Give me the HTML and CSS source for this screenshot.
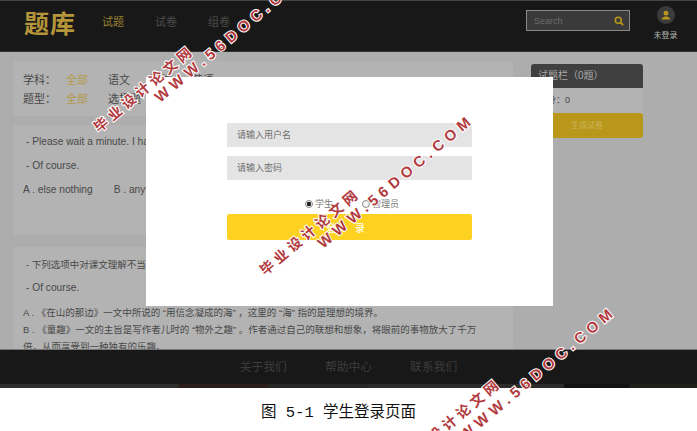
FILE: index.html
```html
<!DOCTYPE html>
<html lang="en">
<head>
	<meta charset="UTF-8">
	<title>学生登录页面</title>
	<link rel="stylesheet" href="styles.css">
</head>
<body>
<div class="shot">
	<header class="top">
		<div class="logo">题库</div>
		<nav class="nav">
			<a class="on">试题</a>
			<a>试卷</a>
			<a>组卷</a>
		</nav>
		<div class="search">
			<span>Search</span>
			<svg width="10" height="10" viewBox="0 0 10 10"><circle cx="4.3" cy="4.3" r="3" fill="none" stroke="#b8971b" stroke-width="1.6"/><path d="M6.5 6.5L9.2 9.2" stroke="#b8971b" stroke-width="1.8"/></svg>
		</div>
		<div class="user">
			<div class="avatar">
				<svg width="10" height="10" viewBox="0 0 10 10"><circle cx="5" cy="3.2" r="2.4" fill="#b8971b"/><path d="M1 9.5V8.2L3.6 6.6H6.4L9 8.2V9.5Z" fill="#b8971b"/></svg>
			</div>
			<div class="user-name">未登录</div>
		</div>
	</header>

	<div class="main">
		<div class="left">
			<section class="filter">
				<div class="filter-row">
					<span class="filter-label">学科：</span>
					<span class="filter-item gold">全部</span>
					<span class="filter-item">语文</span>
					<span class="filter-item">数学</span>
					<span class="filter-item">英语</span>
				</div>
				<div class="filter-row">
					<span class="filter-label">题型：</span>
					<span class="filter-item gold">全部</span>
					<span class="filter-item">选择题</span>
				</div>
			</section>
			<section class="card card-one">
				<p class="ask">- Please wait a minute. I have something to tell you.</p>
				<p class="ask">- Of course.</p>
				<p class="opts"><span>A . else nothing</span><span>B . anything else</span></p>
			</section>
			<section class="card card-two">
				<p class="ask ask-cn">- 下列选项中对课文理解不当的一项是</p>
				<p class="ask">- Of course.</p>
				<p class="opt">A . 《在山的那边》一文中所说的 “用信念凝成的海” ，这里的 “海” 指的是理想的境界。</p>
				<p class="opt">B . 《童趣》一文的主旨是写作者儿时的 “物外之趣” 。作者通过自己的联想和想象，将眼前的事物放大了千万</p>
				<p class="opt">倍，从而享受到一种独有的乐趣。</p>
			</section>
		</div>
		<aside class="side">
			<div class="side-head">试题栏（0题）</div>
			<div class="side-count">总分：0</div>
			<div class="side-btn">生成试卷</div>
		</aside>
	</div>

	<footer class="foot">
		<a>关于我们</a>
		<a>帮助中心</a>
		<a>联系我们</a>
	</footer>
	<div class="strip">
		<i class="s1"></i><i class="s2"></i><i class="s3"></i><i class="s4"></i><i class="s5"></i><i class="s6"></i>
	</div>

	<!-- login dialog -->
	<div class="modal">
		<input class="field" type="text" placeholder="请输入用户名">
		<input class="field" type="password" placeholder="请输入密码">
		<div class="roles">
			<label class="role"><span class="radio checked"></span>学生</label>
			<label class="role"><span class="radio"></span>管理员</label>
		</div>
		<button class="login" type="button">登 录</button>
	</div>
</div>

<p class="caption">图 5-1 学生登录页面</p>

<!-- stamped watermarks -->
<svg class="marks" width="697" height="431" viewBox="0 0 697 431">
	<text class="mark" x="99" y="133" textLength="122" transform="rotate(-40 99 133)">毕业设计论文网</text>
	<text class="mark mark-url" x="160" y="103" textLength="194" transform="rotate(-40 160 103)">WWW.56DOC.COM</text>
	<text class="mark" x="265" y="276" textLength="122" transform="rotate(-40 265 276)">毕业设计论文网</text>
	<text class="mark mark-url" x="323" y="249" textLength="194" transform="rotate(-40 323 249)">WWW.56DOC.COM</text>
	<text class="mark" x="406" y="466" textLength="122" transform="rotate(-40 406 466)">毕业设计论文网</text>
	<text class="mark mark-url" x="465" y="441" textLength="194" transform="rotate(-40 465 441)">WWW.56DOC.COM</text>
</svg>
</body>
</html>
```

FILE: styles.css
```css
* {
	box-sizing: border-box;
}

body {
	margin: 0;
	width: 697px;
	height: 431px;
	overflow: hidden;
	background: #fff;
	position: relative;
	font-family: "Liberation Sans", "Noto Sans CJK SC", sans-serif;
	color: #484848;
}

p {
	margin: 0;
}

.shot {
	position: relative;
	height: 388px;
	overflow: hidden;
	display: flex;
	flex-direction: column;
	background: #adadad;
}

/* header */
.top {
	height: 52px;
	flex: none;
	display: flex;
	align-items: flex-start;
	background: #181818;
	border-top: 1px solid #444;
	border-bottom: 1px solid #333;
}

.logo {
	width: 102px;
	padding-left: 24px;
	font-family: "Noto Sans CJK SC", serif;
	font-size: 25px;
	line-height: 42px;
	font-weight: 700;
	letter-spacing: 1px;
	color: #b5953a;
	white-space: nowrap;
}

.nav {
	display: flex;
	gap: 31px;
	padding-top: 12px;
	width: 424px;
	font-size: 11px;
	line-height: 18px;
	color: #4c4c4c;
}

.nav .on {
	color: #9a8130;
}

.search {
	width: 104px;
	height: 21px;
	margin-top: 9px;
	padding: 0 5px 0 7px;
	display: flex;
	align-items: center;
	justify-content: space-between;
	background: #3a3a3a;
	border: 1px solid #8a8a8a;
	font-size: 9px;
	color: #6d6d6d;
}

.user {
	margin-left: 22px;
	width: 27px;
	display: flex;
	flex-direction: column;
	align-items: center;
	padding-top: 5px;
}

.avatar {
	width: 18px;
	height: 18px;
	border-radius: 50%;
	background: #3b3b3b;
	display: flex;
	align-items: center;
	justify-content: center;
}

.user-name {
	margin-top: 6px;
	font-size: 8px;
	line-height: 12px;
	color: #b0b0b0;
	white-space: nowrap;
}

/* main area */
.main {
	height: 297px;
	flex: none;
	overflow: hidden;
	display: flex;
	padding-left: 14px;
}

.left {
	width: 499px;
	padding-top: 9px;
}

.filter {
	height: 55px;
	padding: 10px 9px 0;
	background: #b3b3b3;
	font-size: 11px;
	line-height: 19px;
}

.filter-row {
	display: flex;
}

.filter-label {
	width: 43px;
}

.filter-item {
	width: 42px;
	white-space: nowrap;
}

.gold {
	color: #b39a4c;
}

.card {
	margin-top: 9px;
	background: #b3b3b3;
	font-size: 10.2px;
	padding: 0 9px;
}

.card-one {
	height: 110px;
	padding-top: 5px;
}

.card-two {
	margin-top: 12px;
	height: 110px;
	padding-top: 6px;
}

.ask {
	padding-left: 3px;
	line-height: 24px;
	white-space: nowrap;
}

.ask-cn {
	font-size: 9.5px;
	line-height: 23px;
}

.opts {
	display: flex;
	gap: 21px;
	line-height: 23px;
}

.opt {
	font-size: 9.5px;
	line-height: 17px;
	white-space: nowrap;
}

.card-two .ask + .opt {
	margin-top: 4px;
}

.side {
	width: 112px;
	margin: 12px 0 0 18px;
}

.side-head {
	height: 24px;
	padding-left: 7px;
	background: #3f3f3f;
	border-radius: 3px 3px 0 0;
	font-size: 10px;
	line-height: 24px;
	color: #a8a8a8;
}

.side-count {
	height: 25px;
	padding-left: 7px;
	background: #b3b3b3;
	font-size: 9px;
	line-height: 25px;
}

.side-btn {
	height: 25px;
	background: #b8971b;
	border-radius: 3px;
	font-size: 8px;
	line-height: 25px;
	text-align: center;
	color: #cdb55c;
}

/* footer */
.foot {
	height: 35px;
	flex: none;
	display: flex;
	justify-content: center;
	gap: 38px;
	background: #181818;
	border-top: 1px solid #777;
	font-size: 11.8px;
	line-height: 35px;
	color: #3d3d3d;
}

.strip {
	flex: 1;
	display: flex;
}

.strip i {
	display: block;
}

.s1 { width: 178px; background: #2e2e2e; }
.s2 { width: 90px; background: #2b1e1b; }
.s3 { width: 100px; background: #282826; }
.s4 { width: 196px; background: #2e2c2b; }
.s5 { width: 65px; background: #141211; }
.s6 { width: 68px; background: #211f1c; }

/* login dialog */
.modal {
	position: absolute;
	left: 146px;
	top: 77px;
	width: 407px;
	height: 229px;
	padding: 46px 81px 0;
	display: flex;
	flex-direction: column;
	background: #fff;
}

.field {
	height: 24px;
	margin: 0 0 9px;
	padding: 0 10px;
	border: 0;
	border-radius: 0;
	outline: 0;
	background: #e4e4e4;
	font-family: inherit;
	font-size: 9px;
}

.field::placeholder {
	color: #6e6e6e;
	opacity: 1;
}

.roles {
	margin-top: 8px;
	height: 14px;
	padding-left: 5px;
	display: flex;
	justify-content: center;
	gap: 29px;
	font-size: 9px;
	line-height: 14px;
	color: #777;
}

.role {
	display: flex;
	align-items: center;
	gap: 2px;
}

.radio {
	width: 8px;
	height: 8px;
	border: 1px solid #888;
	border-radius: 50%;
	background: #f4f4f4;
}

.radio.checked {
	background: radial-gradient(circle, #222 0 2px, #f4f4f4 2.5px);
}

.login {
	height: 26px;
	margin-top: 3px;
	padding: 0;
	border: 0;
	border-radius: 2px;
	background: #ffd221;
	font-family: inherit;
	font-size: 10px;
	letter-spacing: 8px;
	color: #fff;
}

.caption {
	height: 43px;
	padding: 15px 20px 0 0;
	text-align: center;
	font-family: "Liberation Mono", "Noto Sans CJK SC", monospace;
	font-size: 15.5px;
	line-height: 20px;
	color: #111;
}

.marks {
	position: absolute;
	left: 0;
	top: 0;
}

.mark {
	font-family: "Liberation Sans", "Noto Sans CJK SC", sans-serif;
	font-size: 14px;
	font-weight: 700;
	fill: #b23a3e;
	stroke: #fff;
	stroke-width: 2px;
	paint-order: stroke;
}

.mark-url {
	font-size: 15px;
}
```
